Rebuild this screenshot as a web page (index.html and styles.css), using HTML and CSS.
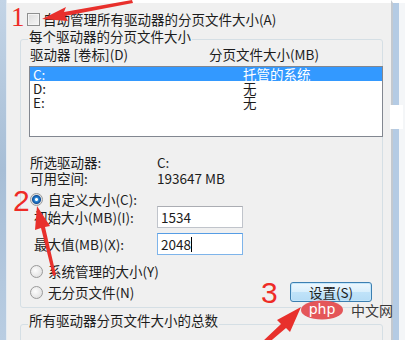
FILE: index.html
```html
<!DOCTYPE html>
<html lang="zh-CN">
	<head>
		<meta charset="UTF-8" />
		<meta name="viewport" content="width=device-width, initial-scale=1.0" />
		<title>虚拟内存</title>
		<link rel="stylesheet" href="styles.css">
	</head>
	<body>
		<div class="screen">
			<div class="frame-left"></div>
			<div class="dialog">
				<div class="check-row">
					<span class="checkbox"></span>
					<span>自动管理所有驱动器的分页文件大小(A)</span>
				</div>
				<div class="group">
					<div class="group-title">每个驱动器的分页文件大小</div>
					<div class="list-head">
						<span>驱动器 [卷标](D)</span>
						<span>分页文件大小(MB)</span>
					</div>
					<div class="listbox">
						<div class="list-row selected"><span>C:</span><span>托管的系统</span></div>
						<div class="list-row"><span>D:</span><span>无</span></div>
						<div class="list-row"><span>E:</span><span>无</span></div>
					</div>
					<div class="info">
						<span>所选驱动器:</span><span>C:</span>
						<span>可用空间:</span><span>193647 MB</span>
					</div>
					<div class="radio-row first">
						<span class="radio on"></span>
						<span>自定义大小(C):</span>
					</div>
					<div class="field-row">
						<span class="field-label">初始大小(MB)(I):</span>
						<span class="input">1534</span>
					</div>
					<div class="field-row second">
						<span class="field-label">最大值(MB)(X):</span>
						<span class="input focused">2048<span class="caret"></span></span>
					</div>
					<div class="bottom-row">
						<div class="radios">
							<div class="radio-row">
								<span class="radio"></span>
								<span>系统管理的大小(Y)</span>
							</div>
							<div class="radio-row last">
								<span class="radio"></span>
								<span>无分页文件(N)</span>
							</div>
						</div>
						<button class="btn">设置(S)</button>
					</div>
				</div>
				<div class="group group-total">
					<div class="group-title">所有驱动器分页文件大小的总数</div>
				</div>
			</div>
			<div class="frame-right"></div>
			<div class="patch"></div>

			<!-- annotation arrows and watermark drawn over the dialog -->
			<svg class="marks" viewBox="0 0 405 340">
				<text x="11" y="26" class="num serif">1</text>
				<polygon points="42,19 66,7 64,12 132,0 133,3 65,16 68,21" fill="#e8302c" />
				<text x="13" y="211" class="num">2</text>
				<polygon points="37,206 50,226 45,227 56,275 53,276 41,228 35,230" fill="#e8302c" />
				<text x="261" y="303" class="num">3</text>
				<polygon points="301,307 290,332 286,328 266,345 262,342 281,324 277,320" fill="#e8302c" />
				<ellipse cx="322" cy="310" rx="21" ry="9.5" fill="#e45659" />
				<text x="322" y="314" class="wm-php">php</text>
				<text x="351" y="316" class="wm-cn">中文网</text>
			</svg>
		</div>
	</body>
</html>
```

FILE: styles.css
```css
body {
	margin: 0;
	font-family: 'Noto Sans CJK SC', 'Noto Sans', sans-serif;
	font-size: 13.5px;
	line-height: 16px;
	color: #1c1c1c;
	background: #fff;
}
.screen {
	position: relative;
	width: 405px;
	height: 340px;
	display: flex;
	overflow: hidden;
}
.frame-left {
	width: 6px;
	background: linear-gradient(to bottom, #c3d4e6, #a7bed6 50%, #b9cde2);
	border-right: 1px solid #e4ebf2;
}
.frame-right {
	width: 12px;
	border-top: 3px solid #fff;
	border-left: 2px solid #c3c9d0;
	background: linear-gradient(to right, #b4cbe4 0 6px, #f4f6f8 6px);
}
.dialog {
	flex: 1;
	background: #f0f0f0;
	border-top: 3px solid #fff;
	padding: 9px 0 0 13px;
}
.check-row {
	display: flex;
	align-items: center;
	gap: 3px;
	height: 14px;
	margin-left: 7px;
}
.checkbox {
	width: 11px;
	height: 11px;
	border: 1px solid #8e8f8f;
	background: linear-gradient(135deg, #dcdcdc, #f6f6f6);
	box-shadow: inset 0 0 0 1px #f4f4f4;
}
.group {
	width: 363px;
	box-sizing: border-box;
	margin-top: 13px;
	border: 1px solid #d5dfe5;
	border-radius: 3px;
	padding: 0 0 8px 0;
}
.group-title {
	width: max-content;
	margin: -12px 0 0 7px;
	padding: 0 1px;
	background: #f0f0f0;
	height: 16px;
	line-height: 16px;
}
.list-head {
	display: grid;
	grid-template-columns: 179px 1fr;
	margin: 2px 0 0 9px;
}
.listbox {
	width: 354px;
	height: 71px;
	box-sizing: border-box;
	margin: 4px 0 0 8px;
	border: 1px solid #828790;
	background: #fff;
}
.list-row {
	display: grid;
	grid-template-columns: 210px 1fr;
	padding-left: 3px;
	height: 14px;
	line-height: 14px;
}
.list-row.selected {
	background: #3399ff;
	color: #fff;
}
.info {
	display: grid;
	grid-template-columns: 127px 1fr;
	margin: 17px 0 0 9px;
}
.radio-row {
	display: flex;
	align-items: center;
	gap: 5px;
	height: 14px;
	margin-left: 9px;
}
.radio-row.first {
	margin-top: 6px;
}
.radios .radio-row {
	margin-top: 9px;
}
.radios .radio-row.last {
	margin-top: 7px;
}
.radio {
	width: 11px;
	height: 11px;
	border-radius: 50%;
	border: 1px solid #9a9a9a;
	background: radial-gradient(circle at 40% 40%, #fdfdfd, #d9d9d9);
}
.radio.on {
	background: radial-gradient(circle, #fff 0 1px, #2f8ad8 2px, #0d4f9a 4px, #dcdcdc 5px, #f2f2f2 6px);
}
.field-row {
	display: grid;
	grid-template-columns: 123px 86px;
	align-items: center;
	margin-left: 13px;
	height: 22px;
}
.field-row.second {
	margin-top: 5px;
}
.input {
	display: flex;
	align-items: center;
	height: 22px;
	box-sizing: border-box;
	border: 1px solid #c0c4cb;
	border-top-color: #abadb3;
	background: #fff;
	padding-left: 3px;
}
.input.focused {
	border-color: #7eb4ea;
	border-top-color: #569de5;
}
.caret {
	width: 1px;
	height: 15px;
	background: #000;
}
.bottom-row {
	display: flex;
	justify-content: space-between;
}
.btn {
	align-self: flex-end;
	margin: 0 10px -3px 0;
	width: 82px;
	height: 20px;
	border: 1px solid #3c7fb1;
	border-radius: 3px;
	background: linear-gradient(to bottom, #eef7fd, #d9effc 50%, #c0e3f9 51%, #b5dcf5);
	box-shadow: inset 0 0 0 1px #c3e6fb;
	font: inherit;
	line-height: 16px;
	color: #1c1c1c;
	padding: 0;
}
.group-total {
	margin-top: 16px;
	height: 40px;
}
.group-total .group-title {
	margin-top: -13px;
}
.patch {
	position: absolute;
	left: 390px;
	top: 105px;
	width: 13px;
	height: 24px;
	background: #fff;
}
.marks {
	position: absolute;
	left: 0;
	top: 0;
	width: 405px;
	height: 340px;
	pointer-events: none;
}
.num {
	font-family: 'Liberation Sans', sans-serif;
	font-size: 30px;
	fill: #ee2b26;
}
.num.serif {
	font-family: 'Liberation Serif', serif;
	font-size: 27px;
}
.wm-php {
	font-family: 'DejaVu Sans', sans-serif;
	font-size: 14px;
	fill: #fff;
	text-anchor: middle;
}
.wm-cn {
	font-family: 'Noto Sans CJK SC', sans-serif;
	font-size: 14px;
	fill: #3a3a3a;
}
```
